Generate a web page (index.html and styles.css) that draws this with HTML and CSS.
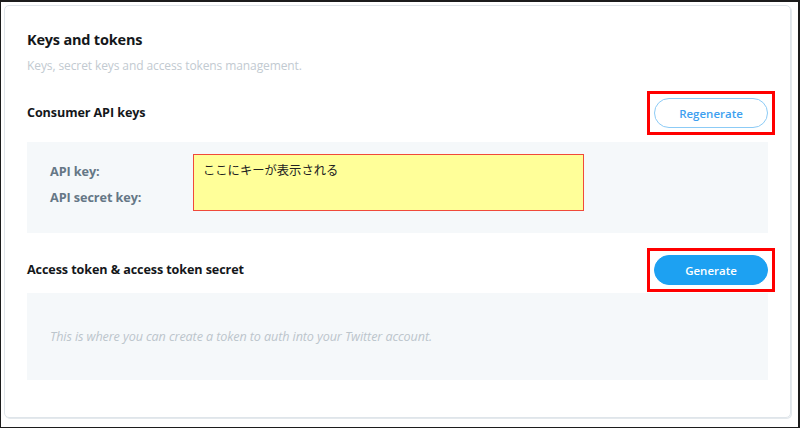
FILE: index.html
```html
<!DOCTYPE html>
<html lang="ja">
<head>
<meta charset="utf-8">
<title>Keys and tokens</title>
<link rel="stylesheet" href="styles.css">
</head>
<body>
<div class="frame">
  <section class="card">
    <h1 class="title">Keys and tokens</h1>
    <p class="subtitle">Keys, secret keys and access tokens management.</p>

    <div class="row">
      <h2 class="row-title">Consumer API keys</h2>
      <div class="mark">
        <button class="btn btn-outline">Regenerate</button>
      </div>
    </div>
    <div class="panel panel-keys">
      <div class="labels">
        <div class="label">API key:</div>
        <div class="label">API secret key:</div>
      </div>
      <div class="keybox">ここにキーが表示される</div>
    </div>

    <div class="row row-2">
      <h2 class="row-title">Access token &amp; access token secret</h2>
      <div class="mark">
        <button class="btn btn-fill">Generate</button>
      </div>
    </div>
    <div class="panel panel-token">
      <p class="hint">This is where you can create a token to auth into your Twitter account.</p>
    </div>
  </section>
</div>
</body>
</html>
```

FILE: styles.css
```css
* { box-sizing: border-box; }
html, body { margin: 0; padding: 0; }
body {
  background: #1c1c1c;
  width: 800px;
  height: 428px;
  overflow: hidden;
  font-family: "Open Sans", "Noto Sans", "Liberation Sans", sans-serif;
}
.frame {
  margin: 2px 2px 0 1px;
  height: 425px;
  background: #fff;
  padding: 3px 7px 0 3px;
}
.card {
  height: 413px;
  border: 1px solid #dfe5ea;
  border-radius: 5px;
  box-shadow: 1px 1px 0 #e4e9ed;
  padding: 24px 22px 0 22px;
}
.title {
  margin: 0;
  font-size: 14.5px;
  line-height: 20px;
  font-weight: 700;
  color: #14171a;
  letter-spacing: -0.2px;
}
.subtitle {
  margin: 8px 0 0;
  font-size: 12px;
  line-height: 16px;
  color: #c2cad1;
  letter-spacing: -0.1px;
}
.row {
  margin-top: 17px;
  height: 44px;
  display: flex;
  align-items: center;
  justify-content: space-between;
}
.row-2 { margin-top: 15px; }
.row-title {
  margin: 0;
  font-size: 12.6px;
  line-height: 16px;
  font-weight: 700;
  color: #14171a;
  letter-spacing: -0.1px;
}
.mark {
  width: 128px;
  height: 44px;
  margin-right: -7px;
  border: 3px solid #ff0000;
  display: flex;
  align-items: center;
  justify-content: center;
}
.btn {
  width: 114px;
  height: 30px;
  border-radius: 15px;
  font-family: inherit;
  font-size: 11.5px;
  font-weight: 600;
  padding: 0;
  cursor: pointer;
}
.btn-outline {
  background: #fff;
  border: 1px solid #8ccbf6;
  color: #3d9ff0;
}
.btn-fill {
  background: #1da1f2;
  border: 1px solid #1da1f2;
  color: #fff;
}
.panel {
  background: #f5f8fa;
}
.panel-keys {
  margin-top: 7px;
  height: 91px;
  padding: 12px 0 0 23px;
  display: flex;
  align-items: flex-start;
}
.labels {
  width: 143px;
  padding-top: 4px;
}
.label {
  font-size: 12.7px;
  line-height: 26px;
  font-weight: 700;
  color: #657786;
  letter-spacing: -0.1px;
}
.keybox {
  width: 391px;
  height: 57px;
  background: #ffff99;
  border: 1px solid #f04a3a;
  padding: 7px 0 0 9px;
  font-family: "Noto Sans CJK JP", sans-serif;
  font-size: 12.3px;
  line-height: 17px;
  color: #222;
}
.panel-token {
  margin-top: 1px;
  height: 87px;
  padding: 0 23px;
  display: flex;
  align-items: center;
}
.hint {
  margin: 0;
  font-size: 12.6px;
  font-style: italic;
  color: #bcc5cc;
  letter-spacing: -0.1px;
}
```
